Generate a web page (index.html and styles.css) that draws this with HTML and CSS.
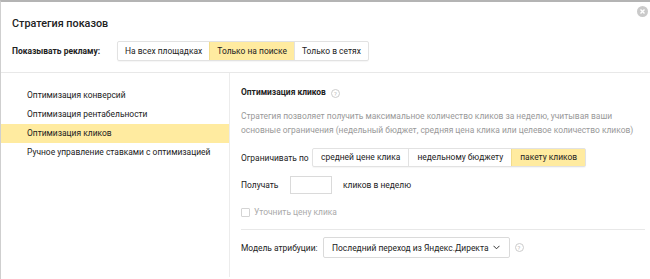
FILE: index.html
```html
<!DOCTYPE html>
<html lang="ru">
<head>
    <meta charset="UTF-8">
    <title>Стратегия показов</title>
    <link rel="stylesheet" href="styles.css">
</head>
<body>
    <div class="modal">
        <span class="close">
            <svg width="11" height="11" viewBox="0 0 11 11">
                <circle cx="5.5" cy="5.5" r="5.5" fill="#cacaca"/>
                <path d="M3.5 3.5 L7.5 7.5 M7.5 3.5 L3.5 7.5" stroke="#fff" stroke-width="1.4"/>
            </svg>
        </span>

        <div class="header">
            <h1>Стратегия показов</h1>
            <div class="row">
                <span class="label">Показывать рекламу:</span>
                <div class="group top">
                    <span class="seg">На всех площадках</span>
                    <span class="seg active">Только на поиске</span>
                    <span class="seg">Только в сетях</span>
                </div>
            </div>
        </div>

        <div class="main">
            <ul class="sidebar">
                <li>Оптимизация конверсий</li>
                <li>Оптимизация рентабельности</li>
                <li class="selected">Оптимизация кликов</li>
                <li>Ручное управление ставками с оптимизацией</li>
            </ul>

            <div class="content">
                <h2>Оптимизация кликов <span class="hint">?</span></h2>
                <p class="desc">Стратегия позволяет получить максимальное количество кликов за неделю, учитывая ваши<br>основные ограничения (недельный бюджет, средняя цена клика или целевое количество кликов)</p>

                <div class="line limit">
                    <span class="caption">Ограничивать по</span>
                    <div class="group">
                        <span class="seg">средней цене клика</span>
                        <span class="seg">недельному бюджету</span>
                        <span class="seg active">пакету кликов</span>
                    </div>
                </div>

                <div class="line get">
                    <span class="caption">Получать</span>
                    <span class="input"></span>
                    <span>кликов в неделю</span>
                </div>

                <label class="check">
                    <span class="box"></span>
                    Уточнить цену клика
                </label>

                <div class="line model">
                    <span class="caption">Модель атрибуции:</span>
                    <span class="select">
                        Последний переход из Яндекс.Директа
                        <svg width="7" height="5" viewBox="0 0 7 5">
                            <path d="M0.5 0.8 L3.5 3.8 L6.5 0.8" fill="none" stroke="#333" stroke-width="1"/>
                        </svg>
                    </span>
                    <span class="hint">?</span>
                </div>
            </div>
        </div>
    </div>
</body>
</html>
```

FILE: styles.css
```css
body {
    margin: 0;
    font-family: Roboto, "Liberation Sans", sans-serif;
    font-size: 8.45px;
    color: #222;
    background: #fff;
}
.modal {
    position: relative;
    width: 649px;
    height: 277px;
    border-top: 2px solid #b4b4b4;
    border-left: 1px solid #cfcfcf;
    overflow: hidden;
}
.close {
    position: absolute;
    top: 4px;
    right: 2px;
    line-height: 0;
}
.header {
    padding: 13px 11px 11px;
    border-bottom: 1px solid #e8e8e8;
}
h1 {
    margin: 0 0 8px;
    font-size: 10.8px;
    line-height: 18px;
    font-weight: 500;
}
.row {
    display: flex;
    align-items: center;
}
.label {
    font-weight: bold;
    width: 105px;
}
.group {
    display: flex;
    border: 1px solid #e2e2e2;
    border-radius: 2px;
    box-shadow: 0 1px 1px rgba(0, 0, 0, 0.04);
}
.seg {
    padding: 0 8px;
    height: 17px;
    line-height: 17px;
    border-left: 1px solid #e2e2e2;
    white-space: nowrap;
}
.top .seg {
    padding: 0 7px;
    height: 18px;
    line-height: 18px;
}
.seg:first-child {
    border-left: none;
}
.seg.active {
    background: #ffeba0;
    border-color: #f2dc8c;
}
.main {
    display: flex;
    height: 204px;
}
.sidebar {
    list-style: none;
    margin: 0;
    padding: 13px 0 0;
    width: 228px;
    border-right: 1px solid #ececec;
}
.sidebar li {
    height: 19px;
    line-height: 19px;
    padding-left: 26px;
    white-space: nowrap;
}
.sidebar li.selected {
    background: #ffeba0;
}
.content {
    flex: 1;
    padding: 11px 5px 0 11px;
}
h2 {
    margin: 0;
    font-size: 8.45px;
    line-height: 17px;
    font-weight: bold;
}
.hint {
    display: inline-block;
    width: 7px;
    height: 7px;
    border: 1px solid #ccc;
    border-radius: 50%;
    color: #bbb;
    font-size: 6px;
    line-height: 7px;
    text-align: center;
    font-weight: normal;
    vertical-align: -1px;
    margin-left: 3px;
}
.desc {
    margin: 9px 0 11px;
    line-height: 13.5px;
    color: #999;
    white-space: nowrap;
}
.line {
    display: flex;
    align-items: center;
}
.caption {
    white-space: nowrap;
}
.limit .caption {
    width: 71px;
}
.get {
    margin-top: 9px;
}
.get .caption {
    width: 49px;
}
.input {
    width: 40px;
    height: 16px;
    border: 1px solid #dadada;
    margin-right: 11px;
}
.check {
    display: flex;
    align-items: center;
    gap: 4px;
    height: 12px;
    margin-top: 12px;
    padding-bottom: 11px;
    border-bottom: 1px solid #e8e8e8;
    color: #aaa;
}
.box {
    width: 7px;
    height: 7px;
    border: 1px solid #d4d4d4;
    border-radius: 1px;
}
.model {
    margin-top: 7px;
}
.model .caption {
    width: 82px;
}
.select {
    display: flex;
    align-items: center;
    gap: 4px;
    height: 19px;
    padding: 0 9px 0 8px;
    border: 1px solid #dadada;
    border-radius: 2px;
    margin-right: 2px;
    white-space: nowrap;
}
```
